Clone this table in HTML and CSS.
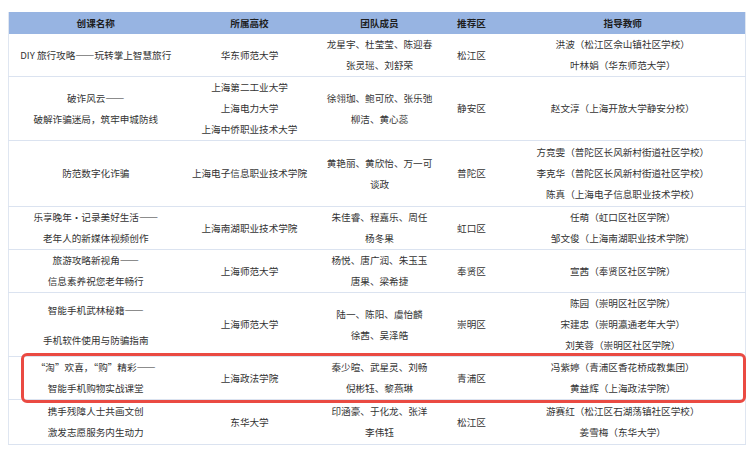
FILE: index.html
```html
<!DOCTYPE html>
<html lang="zh-CN">
<head>
<meta charset="utf-8">
<link rel="stylesheet" href="styles.css">
</head>
<body>
<div class="wrap">
<table class="list">
<colgroup>
<col class="c1"><col class="c2"><col class="c3"><col class="c4"><col class="c5">
</colgroup>
<thead>
<tr><th>创课名称</th><th>所属高校</th><th>团队成员</th><th>推荐区</th><th>指导教师</th></tr>
</thead>
<tbody>
<tr>
<td>DIY 旅行攻略——玩转掌上智慧旅行</td>
<td>华东师范大学</td>
<td>龙星宇、杜莹莹、陈迎春<br>张灵瑶、刘舒荣</td>
<td>松江区</td>
<td>洪波（松江区佘山镇社区学校）<br>叶林娟（华东师范大学）</td>
</tr>
<tr>
<td>破诈风云——<br>破解诈骗迷局，筑牢申城防线</td>
<td>上海第二工业大学<br>上海电力大学<br>上海中侨职业技术大学</td>
<td>徐翎珈、鲍可欣、张乐弛<br>柳洁、黄心蕊</td>
<td>静安区</td>
<td>赵文淳（上海开放大学静安分校）</td>
</tr>
<tr class="pad">
<td>防范数字化诈骗</td>
<td>上海电子信息职业技术学院</td>
<td>黄艳丽、黄欣怡、万一可<br>谈政</td>
<td>普陀区</td>
<td>方竞雯（普陀区长风新村街道社区学校）<br>李克华（普陀区长风新村街道社区学校）<br>陈真（上海电子信息职业技术学校）</td>
</tr>
<tr>
<td>乐享晚年•记录美好生活——<br>老年人的新媒体视频创作</td>
<td>上海南湖职业技术学院</td>
<td>朱佳睿、程嘉乐、周任<br>杨冬果</td>
<td>虹口区</td>
<td>任萌（虹口区社区学院）<br>邹文俊（上海南湖职业技术学院）</td>
</tr>
<tr>
<td>旅游攻略新视角——<br>信息素养祝您老年畅行</td>
<td>上海师范大学</td>
<td>杨悦、唐广润、朱玉玉<br>唐果、梁希捷</td>
<td>奉贤区</td>
<td>宣茜（奉贤区社区学院）</td>
</tr>
<tr>
<td class="loose">智能手机武林秘籍——<br>手机软件使用与防骗指南</td>
<td>上海师范大学</td>
<td>陆一、陈阳、虞怡麟<br>徐茜、吴泽皓</td>
<td>崇明区</td>
<td>陈园（崇明区社区学院）<br>宋建忠（崇明瀛通老年大学）<br>刘芙蓉（崇明区社区学院）</td>
</tr>
<tr>
<td>“淘”欢喜，“购”精彩——<br>智能手机购物实战课堂</td>
<td>上海政法学院</td>
<td>秦少暄、武星灵、刘畅<br>倪彬钰、黎燕琳</td>
<td>青浦区</td>
<td>冯紫婷（青浦区香花桥成教集团）<br>黄益辉（上海政法学院）</td>
</tr>
<tr class="pad">
<td>携手残障人士共画文创<br>激发志愿服务内生动力</td>
<td>东华大学</td>
<td>印涵豪、于化龙、张洋<br>李伟钰</td>
<td>松江区</td>
<td>游赛红（松江区石湖荡镇社区学校）<br>姜雪梅（东华大学）</td>
</tr>
</tbody>
</table>
<div class="highlight"></div>
</div>
</body>
</html>
```
FILE: styles.css
```css
html, body {
  margin: 0;
  padding: 0;
  background: #ffffff;
}
body {
  font-family: "Noto Sans CJK SC", "Noto Sans", sans-serif;
  font-size: 9.6px;
  color: #333333;
}
.wrap {
  position: relative;
  padding: 12px 0 0 8px;
  width: 737px;
}
.list {
  width: 737px;
  border-collapse: collapse;
  table-layout: fixed;
  border-left: 1px solid #dfe6f1;
  border-right: 1px solid #dfe6f1;
}
.c1 { width: 174px; }
.c2 { width: 134px; }
.c3 { width: 126px; }
.c4 { width: 58px; }
.c5 { width: 245px; }
.list th {
  background: #97b4e2;
  color: #1e1e1e;
  font-weight: bold;
  height: 22px;
  padding: 0;
  line-height: 22px;
  text-align: center;
}
.list td {
  padding: 0;
  line-height: 21px;
  text-align: center;
  vertical-align: middle;
  border-bottom: 1px solid #dbe3f0;
  white-space: nowrap;
}
.list tr.pad td {
  padding: 1px 0;
}
.list td.loose {
  line-height: 30px;
}
.highlight {
  position: absolute;
  left: 21px;
  top: 353px;
  width: 725px;
  height: 50px;
  box-sizing: border-box;
  border: 3px solid #ea4a42;
  border-radius: 6px;
}
```
